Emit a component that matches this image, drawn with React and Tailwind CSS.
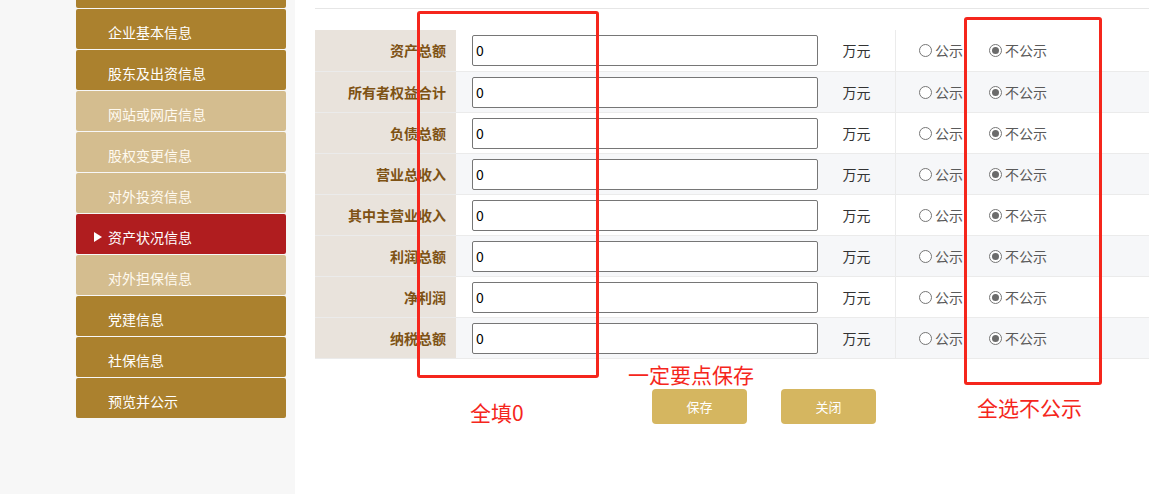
import React from "react";

const menu = [
  { name: "", tone: "dark" },
  { name: "企业基本信息", tone: "dark" },
  { name: "股东及出资信息", tone: "dark" },
  { name: "网站或网店信息", tone: "light" },
  { name: "股权变更信息", tone: "light" },
  { name: "对外投资信息", tone: "light" },
  { name: "资产状况信息", tone: "active" },
  { name: "对外担保信息", tone: "light" },
  { name: "党建信息", tone: "dark" },
  { name: "社保信息", tone: "dark" },
  { name: "预览并公示", tone: "dark" },
];

const rows = [
  "资产总额",
  "所有者权益合计",
  "负债总额",
  "营业总收入",
  "其中主营业收入",
  "利润总额",
  "净利润",
  "纳税总额",
];

const font = { fontFamily: '"Noto Sans CJK SC", "Noto Sans", sans-serif' };

function MenuItem({ item }) {
  let cls = "bg-[#ab812e] text-white";
  if (item.tone === "light") cls = "bg-[#d4bd8f] text-[#fffaf0]";
  if (item.tone === "active") cls = "bg-[#b01d1f] text-white";

  return (
    <div className={`h-[40px] flex items-center pl-[32px] pt-[6px] text-[14px] rounded-[2px] ${cls}`}>
      {item.tone === "active" && (
        <span className="w-0 h-0 border-y-[5px] border-y-transparent border-l-[8px] border-l-white -ml-[14px] mr-[6px]"></span>
      )}
      {item.name}
    </div>
  );
}

function Radio({ checked, label }) {
  return (
    <span className="flex items-center gap-[3px] text-[14px] text-[#5a5a5a]">
      <span className="w-[13px] h-[13px] rounded-full border border-[#767676] bg-white flex items-center justify-center">
        {checked && <span className="w-[7px] h-[7px] rounded-full bg-[#6b6b6b]"></span>}
      </span>
      {label}
    </span>
  );
}

export default function App() {
  return (
    <div className="relative flex w-full h-[494px] overflow-hidden bg-white" style={font}>

      {/* LEFT MENU */}

      <div className="w-[295px] shrink-0 bg-[#f7f7f7]">
        <div className="ml-[76px] w-[210px] -mt-[32px] flex flex-col gap-px">
          {menu.map((item, i) => (
            <MenuItem key={i} item={item} />
          ))}
        </div>
      </div>

      {/* MAIN */}

      <div className="flex-1 pl-[20px]">

        <div className="h-[9px] border-b border-[#e6e6e6]"></div>

        <div className="mt-[21px] border-b border-[#ebebeb]">
          {rows.map((label, i) => (
            <div
              key={label}
              className={`flex h-[41px] ${i > 0 ? "border-t border-[#ebebeb]" : ""} ${i % 2 === 1 ? "bg-[#f6f7f9]" : "bg-white"}`}
            >
              <div className="w-[141px] bg-[#e9e3dc] flex items-center justify-end pr-[10px] text-[14px] font-bold text-[#7e5214]">
                {label}
              </div>
              <div className="w-[362px] flex items-center pl-[16px]">
                <div className="w-[346px] h-[31px] border border-[#767676] rounded-[2px] bg-white flex items-center pl-[3px] text-[14px] text-black">
                  0
                </div>
              </div>
              <div className="w-[78px] flex items-center justify-center text-[14px] text-[#333] border-r border-[#ebebeb]">
                万元
              </div>
              <div className="flex items-center pl-[23px] gap-[26px]">
                <Radio label="公示" />
                <Radio checked label="不公示" />
              </div>
            </div>
          ))}
        </div>

        <div className="mt-[30px] pl-[337px] flex gap-[34px]">
          <button className="w-[95px] h-[35px] rounded-[4px] bg-[#d5b660] text-white text-[13px]">保存</button>
          <button className="w-[95px] h-[35px] rounded-[4px] bg-[#d5b660] text-white text-[13px]">关闭</button>
        </div>
      </div>

      {/* ANNOTATIONS */}

      <div className="absolute left-[417px] top-[11px] w-[182px] h-[367px] border-[3px] border-[#f5261c] rounded-[3px]"></div>
      <div className="absolute left-[964px] top-[17px] w-[138px] h-[368px] border-[3px] border-[#f5261c] rounded-[3px]"></div>
      <div className="absolute left-[628px] top-[360px] text-[21px] leading-[28px] text-[#f5261c]">一定要点保存</div>
      <div className="absolute left-[470px] top-[398px] text-[21px] leading-[28px] text-[#f5261c]">全填0</div>
      <div className="absolute left-[977px] top-[393px] text-[21px] leading-[28px] text-[#f5261c]">全选不公示</div>
    </div>
  );
}
